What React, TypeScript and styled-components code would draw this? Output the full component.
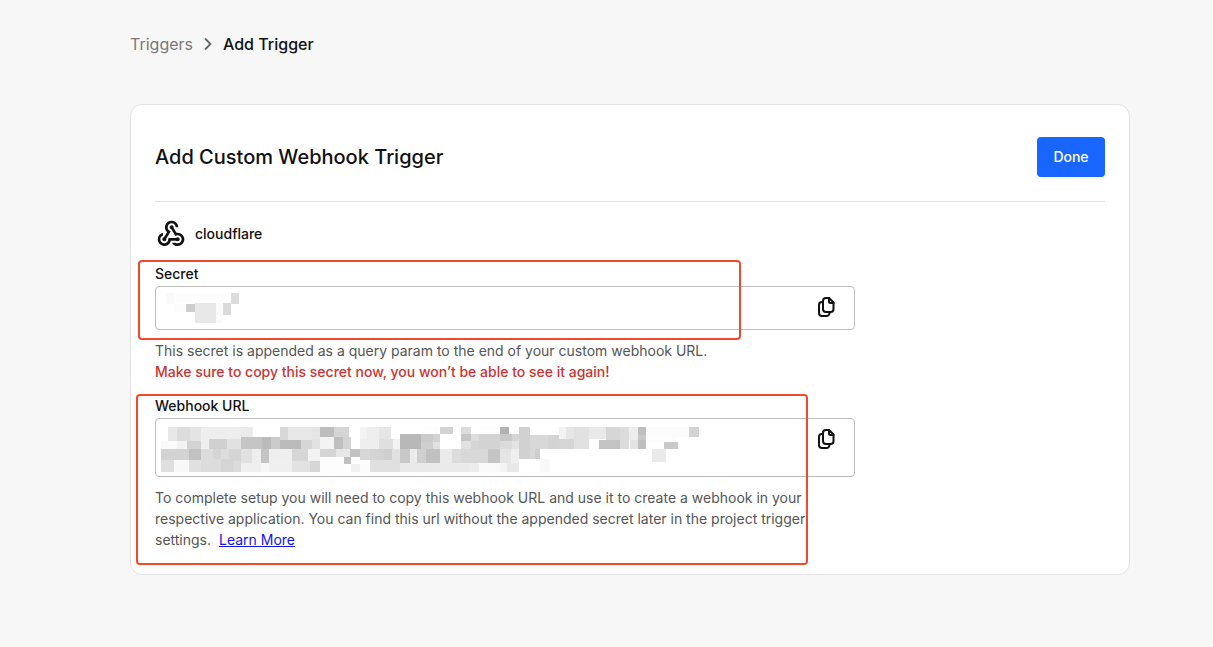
import React from "react";
import styled, { createGlobalStyle } from "styled-components";
import { MdWebhook } from "react-icons/md";

const GlobalStyle = createGlobalStyle`
  *, *::before, *::after { box-sizing: border-box; }
  body {
    margin: 0;
    background: #f7f7f7;
    color: #111;
    font-family: Inter, "Liberation Sans", sans-serif;
    font-size: 14px;
    line-height: 21px;
  }
`;

const Page = styled.main`
  padding: 32px 83px 72px 130px;
`;

const Breadcrumb = styled.nav`
  display: flex;
  align-items: center;
  gap: 7px;
  height: 24px;
  margin-bottom: 48px;
  font-size: 16px;
  line-height: 24px;
`;

const CrumbLink = styled.a`
  color: #777;
  text-decoration: none;
`;

const CurrentCrumb = styled.span`
  font-weight: 500;
`;

const Card = styled.section`
  padding: 32px 24px 24px;
  background: #fff;
  border: 1px solid #e3e3e3;
  border-radius: 12px;
`;

const CardHeader = styled.header`
  display: flex;
  align-items: center;
  justify-content: space-between;
  padding-bottom: 24px;
  border-bottom: 1px solid #e3e3e3;
`;

const Title = styled.h1`
  margin: 0;
  font-size: 20px;
  line-height: 28px;
  font-weight: 500;
`;

const DoneButton = styled.button`
  min-width: 68px;
  height: 40px;
  padding: 0 16px;
  border: 0;
  border-radius: 4px;
  background: #1966ff;
  color: #fff;
  font: inherit;
  line-height: 20px;
  font-weight: 500;
  cursor: pointer;
`;

const TriggerName = styled.div`
  display: flex;
  align-items: center;
  gap: 8px;
  height: 32px;
  margin: 16px 0 14px;
  line-height: 20px;
  font-weight: 500;
`;

const FieldGroup = styled.div`
  position: relative;
  max-width: 700px;
  margin-bottom: 14px;

  &:last-child { margin-bottom: 0; }
`;

const Label = styled.label`
  display: block;
  margin-bottom: 2px;
  line-height: 20px;
  font-weight: 500;
`;

const FieldBox = styled.div`
  position: relative;
  display: flex;
  align-items: flex-start;
  margin-bottom: 10px;
  padding-right: 16px;
  border: 1px solid #bdbdbd;
  border-radius: 4px;
`;

const Input = styled.input`
  flex: 1;
  min-width: 0;
  height: 42px;
  padding: 0 12px;
  border: 0;
  background: transparent;
  font: inherit;
`;

const TextArea = styled.textarea`
  flex: 1;
  min-width: 0;
  height: 57px;
  padding: 8px 12px;
  border: 0;
  background: transparent;
  font: inherit;
  resize: none;
`;

const CopyButton = styled.button`
  display: flex;
  padding: 8px 0;
  border: 0;
  background: none;
  color: #111;
  cursor: pointer;
`;

const Redaction = styled.svg`
  position: absolute;
  top: -1px;
  left: -1px;
  pointer-events: none;
`;

const Help = styled.p<{ $warning?: boolean }>`
  max-width: 656px;
  margin: 0;
  color: ${(p) => (p.$warning ? "#c93434" : "#555")};
  font-weight: ${(p) => (p.$warning ? 500 : 400)};
`;

const LearnMore = styled.a`
  margin-left: 4px;
  color: #1414e6;
  text-decoration: underline;
`;

const Highlight = styled.div<{ $top: number; $left: number; $width: number; $bottom: number }>`
  position: absolute;
  top: ${(p) => p.$top}px;
  left: ${(p) => p.$left}px;
  bottom: ${(p) => p.$bottom}px;
  width: ${(p) => p.$width}px;
  border: 2px solid #f04a2c;
  border-radius: 4px;
  pointer-events: none;
`;

/* x, y, width, height, grey level */
type Block = [number, number, number, number, number];

const secretBlocks: Block[] = [
  [11, 7, 8, 11, 250], [19, 7, 49, 10, 253], [19, 18, 12, 8, 252],
  [31, 18, 9, 8, 206], [40, 17, 21, 20, 232], [61, 17, 7, 20, 251],
  [68, 17, 8, 12, 218], [76, 7, 8, 11, 220],
];

const urlBlocks: Block[] = [
  [13, 9, 9, 14, 231], [22, 9, 13, 14, 220], [35, 9, 11, 14, 228], [46, 9, 40, 12, 238],
  [86, 9, 12, 10, 235], [125, 9, 8, 13, 216], [133, 9, 24, 13, 231], [157, 9, 8, 12, 229],
  [165, 9, 14, 10, 189], [179, 9, 11, 10, 213], [190, 9, 4, 10, 213], [205, 9, 7, 12, 243],
  [212, 9, 12, 12, 238], [224, 9, 12, 12, 230], [267, 9, 17, 7, 253], [285, 9, 13, 7, 211],
  [306, 9, 10, 7, 220], [324, 9, 21, 7, 253], [345, 9, 9, 7, 178], [364, 9, 11, 32, 209],
  [396, 9, 8, 8, 253], [404, 9, 7, 12, 242], [411, 9, 8, 12, 230], [419, 9, 15, 22, 225],
  [434, 9, 17, 12, 233], [451, 9, 14, 13, 214], [465, 9, 9, 22, 220], [474, 9, 9, 13, 237],
  [483, 9, 8, 8, 190], [483, 17, 8, 5, 199], [483, 22, 8, 9, 191], [491, 9, 43, 10, 252],
  [491, 19, 32, 5, 253], [534, 9, 10, 10, 211],

  [6, 23, 16, 8, 250], [22, 23, 10, 8, 243], [32, 23, 14, 8, 211], [46, 21, 8, 10, 239],
  [54, 21, 18, 10, 208], [72, 21, 14, 10, 225], [86, 19, 21, 12, 197], [107, 19, 9, 12, 187],
  [116, 19, 9, 12, 203], [125, 22, 21, 9, 187], [146, 22, 11, 9, 214], [157, 21, 8, 10, 226],
  [165, 19, 14, 12, 243], [179, 19, 9, 12, 191], [188, 19, 8, 12, 211], [205, 21, 19, 10, 238],
  [224, 21, 14, 10, 223], [238, 21, 7, 10, 242], [245, 16, 21, 15, 184], [266, 16, 12, 8, 203],
  [266, 24, 12, 7, 207], [278, 16, 7, 8, 211], [278, 24, 7, 7, 225], [306, 16, 10, 7, 198],
  [306, 23, 10, 8, 225], [316, 16, 8, 7, 221], [316, 23, 8, 8, 214], [324, 16, 21, 15, 211],
  [345, 16, 12, 7, 201], [345, 23, 12, 8, 219], [357, 16, 7, 7, 214], [357, 23, 7, 8, 228],
  [375, 17, 5, 24, 216], [380, 17, 13, 14, 216], [393, 17, 11, 14, 211], [404, 21, 15, 10, 213],
  [444, 22, 21, 9, 195], [475, 22, 8, 9, 227], [509, 24, 14, 7, 201],

  [6, 31, 28, 11, 211], [34, 31, 12, 11, 193], [46, 31, 12, 23, 220], [58, 31, 8, 10, 213],
  [58, 41, 8, 13, 220], [66, 31, 8, 10, 221], [74, 31, 12, 12, 213], [86, 31, 11, 14, 225],
  [97, 31, 9, 14, 238], [106, 31, 8, 14, 196], [114, 31, 23, 12, 238], [137, 31, 16, 12, 214],
  [153, 31, 12, 12, 243], [165, 31, 16, 8, 213], [181, 31, 14, 8, 231], [195, 31, 10, 8, 193],
  [205, 31, 10, 11, 215], [215, 31, 14, 11, 211], [229, 31, 8, 11, 207], [237, 31, 8, 14, 225],
  [245, 31, 10, 14, 200], [255, 31, 7, 14, 235], [262, 31, 9, 14, 208], [271, 31, 14, 14, 193],
  [285, 31, 12, 14, 235], [297, 31, 9, 14, 220], [306, 31, 27, 14, 216], [333, 31, 12, 14, 197],
  [345, 31, 11, 14, 228], [356, 31, 8, 14, 239], [380, 31, 5, 10, 206], [497, 31, 14, 13, 233],

  [6, 42, 13, 12, 223], [19, 42, 15, 12, 248], [34, 42, 12, 12, 224], [66, 41, 12, 13, 213],
  [78, 43, 8, 11, 219], [86, 45, 20, 9, 239], [106, 45, 8, 9, 246], [114, 43, 23, 11, 239],
  [137, 43, 18, 11, 226], [155, 43, 10, 11, 214], [165, 39, 24, 15, 253], [189, 39, 7, 7, 192],
  [196, 46, 9, 8, 241], [205, 42, 10, 12, 252], [215, 42, 30, 12, 224], [245, 45, 31, 9, 233],
  [276, 45, 38, 9, 234], [314, 45, 10, 9, 236], [324, 45, 21, 9, 249], [345, 45, 7, 9, 243],
  [352, 45, 12, 9, 232], [385, 41, 10, 13, 249],
];

function Mosaic({ blocks, height }: { blocks: Block[]; height: number }) {
  return (
    <Redaction width="560" height={height} shapeRendering="crispEdges" aria-hidden="true">
      {blocks.map(([x, y, w, h, g], i) => (
        <rect key={i} x={x} y={y} width={w} height={h} fill={`rgb(${g},${g},${g})`} />
      ))}
    </Redaction>
  );
}

function CopyIcon() {
  return (
    <svg
      width="24"
      height="24"
      viewBox="0 0 24 24"
      fill="none"
      stroke="currentColor"
      strokeWidth="2"
      strokeLinejoin="round"
      strokeLinecap="round"
      aria-hidden="true"
    >
      <path d="M12 3h3l4.500 4.500v6.500a3 3 0 0 1-3 3H12a3 3 0 0 1-3-3V6a3 3 0 0 1 3-3Z" />
      <path d="M15 3v3.500a1.500 1.500 0 0 0 1.500 1.500h3" />
      <path d="M8.500 7H8a3 3 0 0 0-3 3v8a3 3 0 0 0 3 3h4.500a3 3 0 0 0 3-3v-.5" />
    </svg>
  );
}

export default function App() {
  return (
    <>
      <GlobalStyle />
      <Page>
        <Breadcrumb aria-label="Breadcrumb">
          <CrumbLink href="#triggers">Triggers</CrumbLink>
          <svg width="16" height="16" viewBox="0 0 16 16" fill="none" stroke="#666" strokeWidth="1.8" aria-hidden="true">
            <path d="M5 2.5 10.500 8 5 13.5" />
          </svg>
          <CurrentCrumb aria-current="page">Add Trigger</CurrentCrumb>
        </Breadcrumb>

        <Card>
          <CardHeader>
            <Title>Add Custom Webhook Trigger</Title>
            <DoneButton type="button">Done</DoneButton>
          </CardHeader>

          <TriggerName>
            <MdWebhook size={32} aria-hidden="true" />
            <span>cloudflare</span>
          </TriggerName>

          <FieldGroup>
            <Label htmlFor="secret">Secret</Label>
            <FieldBox>
              <Input id="secret" readOnly />
              <Mosaic blocks={secretBlocks} height={44} />
              <CopyButton type="button" aria-label="Copy secret"><CopyIcon /></CopyButton>
            </FieldBox>
            <Help>This secret is appended as a query param to the end of your custom webhook URL.</Help>
            <Help $warning>Make sure to copy this secret now, you won’t be able to see it again!</Help>
            <Highlight $top={-4} $left={-17} $width={603} $bottom={42} />
          </FieldGroup>

          <FieldGroup>
            <Label htmlFor="webhook-url">Webhook URL</Label>
            <FieldBox>
              <TextArea id="webhook-url" readOnly rows={2} />
              <Mosaic blocks={urlBlocks} height={59} />
              <CopyButton type="button" aria-label="Copy webhook URL"><CopyIcon /></CopyButton>
            </FieldBox>
            <Help>
              To complete setup you will need to copy this webhook URL and use it to create a webhook in your
              respective application. You can find this url without the appended secret later in the project trigger
              settings. <LearnMore href="#learn-more">Learn More</LearnMore>
            </Help>
            <Highlight $top={-2} $left={-19} $width={672} $bottom={-15} />
          </FieldGroup>
        </Card>
      </Page>
    </>
  );
}
